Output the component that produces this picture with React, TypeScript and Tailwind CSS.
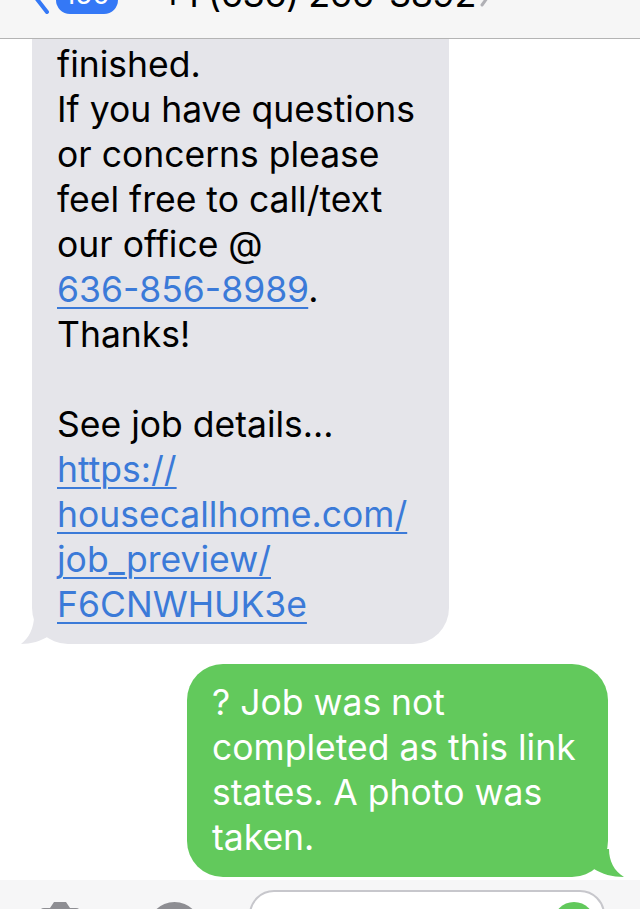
import React from "react";

const font = { fontFamily: "Inter, 'Noto Sans', sans-serif" };

const Header = () => {
    return (
        <div className="h-[40px] bg-[#f6f6f6] border-b border-[#b4b4b4] overflow-hidden">
            <div className="flex items-center h-[40px] -mt-[26px] pl-[30px]">
                <svg width="20" height="40" viewBox="0 0 20 40" className="shrink-0">
                    <path d="M16 2 L3 20 L17 38" fill="none" stroke="#3478f6" strokeWidth="4" strokeLinecap="round" strokeLinejoin="round" />
                </svg>
                <div className="ml-[6px] h-[40px] w-[62px] rounded-[14px] bg-[#3478f6] flex items-center justify-center text-white text-[28px]" style={font}>150</div>
                <div className="ml-[43px] text-[36px] text-black whitespace-nowrap tracking-[-0.5px]" style={font}>+1 (636) 266-3892</div>
                <svg width="14" height="30" viewBox="0 0 14 30" className="ml-[3px] shrink-0">
                    <path d="M3 4 L11 15 L3 26" fill="none" stroke="#b0b0b5" strokeWidth="3" strokeLinecap="round" strokeLinejoin="round" />
                </svg>
            </div>
        </div>
    );
};

const Link = ({ children }: { children: React.ReactNode }) => (
    <span className="text-[#3b7ad8] underline decoration-[2px] underline-offset-[5px]">{children}</span>
);

const IncomingBubble = () => {
    return (
        <div className="relative ml-[32px] w-[417px] bg-[#e5e5ea] rounded-b-[36px] pl-[25px] pt-[3px] pb-[17px]">
            <div className="text-[35.5px] leading-[45px] text-black whitespace-nowrap" style={font}>
                <div>finished.</div>
                <div>If you have questions</div>
                <div>or concerns please</div>
                <div>feel free to call/text</div>
                <div>our office @</div>
                <div><Link>636-856-8989</Link>.</div>
                <div>Thanks!</div>
                <div>&nbsp;</div>
                <div>See job details...</div>
                <div><Link>https://</Link></div>
                <div><Link>housecallhome.com/</Link></div>
                <div><Link>job_preview/</Link></div>
                <div><Link>F6CNWHUK3e</Link></div>
            </div>
            <svg width="30" height="28" viewBox="0 0 30 28" className="absolute -left-[11px] bottom-0">
                <path d="M13 0 C13 12 8 22 0 28 C10 28 20 25 28 20 L28 0 Z" fill="#e5e5ea" />
            </svg>
        </div>
    );
};

const OutgoingBubble = () => {
    return (
        <div className="flex justify-end pr-[32px] mt-[20px]">
            <div className="relative w-[421px] bg-[#62c95c] rounded-[36px] pl-[25px] pt-[16px] pb-[17px]">
                <div className="text-[35.5px] leading-[45px] text-white whitespace-nowrap" style={font}>
                    <div>? Job was not</div>
                    <div>completed as this link</div>
                    <div>states. A photo was</div>
                    <div>taken.</div>
                </div>
                <svg width="32" height="28" viewBox="0 0 32 28" className="absolute -right-[16px] bottom-0">
                    <path d="M17 0 C17 12 22 22 32 28 C20 28 10 25 2 20 L2 0 Z" fill="#62c95c" />
                </svg>
            </div>
        </div>
    );
};

const InputBar = () => {
    return (
        <div className="mt-[3px] h-[29px] bg-[#f6f6f7] overflow-hidden flex items-start">
            <svg width="44" height="34" viewBox="0 0 44 34" className="ml-[38px] mt-[22px] shrink-0">
                <path d="M2 10 Q2 6 6 6 L12 6 L16 0 L28 0 L32 6 L38 6 Q42 6 42 10 L42 34 L2 34 Z" fill="#8e8e93" />
            </svg>
            <div className="ml-[66px] mt-[22px] w-[53px] h-[53px] rounded-full bg-[#8e8e93] shrink-0"></div>
            <div className="ml-[48px] mt-[10px] w-[356px] h-[50px] rounded-full border-2 border-[#c7c7cc] bg-white shrink-0 relative">
                <div className="absolute right-[8px] top-[10px] w-[42px] h-[42px] rounded-full bg-[#62c95c]"></div>
            </div>
        </div>
    );
};

export default function App() {
    return (
        <div className="w-[640px] h-[909px] bg-white overflow-hidden flex flex-col">
            <Header />
            <IncomingBubble />
            <OutgoingBubble />
            <InputBar />
        </div>
    );
}
